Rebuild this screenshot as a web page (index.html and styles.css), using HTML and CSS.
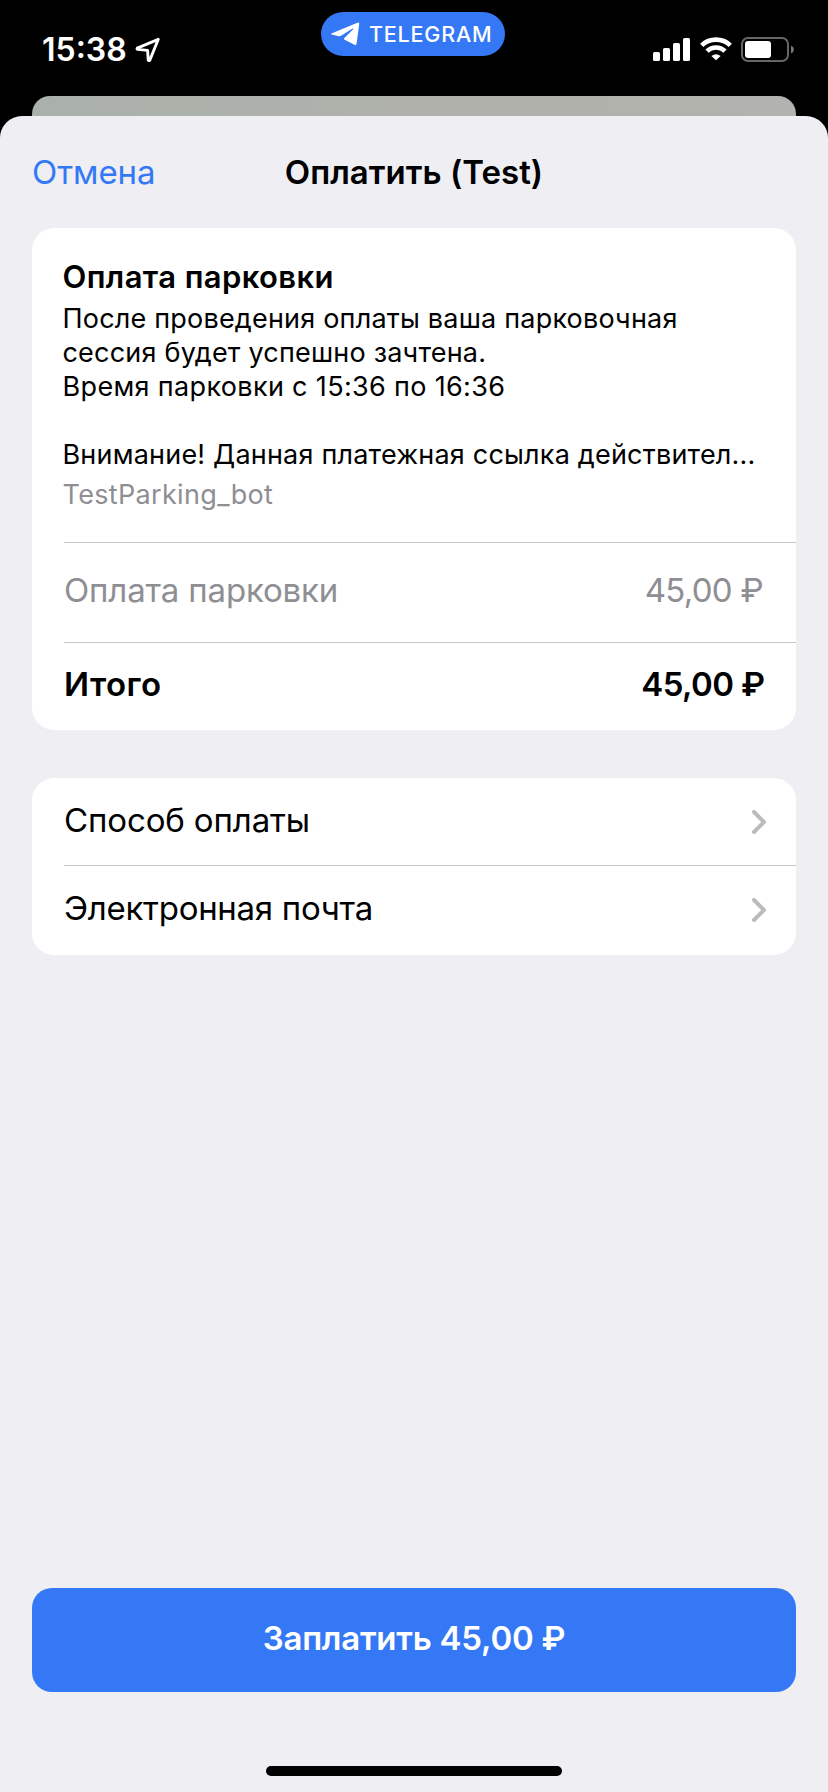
FILE: index.html
```html
<!DOCTYPE html>
<html lang="ru">
<head>
<meta charset="utf-8">
<title>Оплатить (Test)</title>
<link rel="stylesheet" href="styles.css">
</head>
<body>
<div class="screen">
  <header class="status">
    <div class="status-left">
      <span class="clock">15:38</span>
      <svg class="location" width="26" height="26" viewBox="0 0 26 26"><path d="M23.3 2.3 2.2 11.2 Q1.6 12.2 2.8 12.4 L12.6 13.4 13.2 23 Q13.8 24.2 14.8 23.2 Z" fill="none" stroke="#fff" stroke-width="2.9" stroke-linejoin="round"/></svg>
    </div>
    <div class="pill">
      <svg width="29" height="24" viewBox="0 0 29 24"><path d="M.4 11.5 26.4.7Q28.4 0 28.2 2.2L25.6 21.6Q25.1 24 23 22.6L13.6 17.8Q12.3 17 13.4 16L22.2 7.2Q22.6 6.2 21.2 6.8L10.4 13.6Q8.6 14.5 6.8 13.9L.8 12.5Q-.4 12 .4 11.5Z" fill="#fff"/></svg>
      <span class="pill-text">TELEGRAM</span>
    </div>
    <div class="status-right">
      <svg class="signal" width="37" height="23" viewBox="0 0 37 23" fill="#fff"><rect x="0" y="14" width="7" height="9" rx="1.6"/><rect x="10" y="10" width="7" height="13" rx="1.6"/><rect x="20" y="5" width="7" height="18" rx="1.6"/><rect x="30" y="0" width="7" height="23" rx="1.6"/></svg>
      <svg class="wifi" width="32" height="24" viewBox="0 0 32 24" fill="none" stroke="#fff" stroke-width="4.6"><path d="M1.7 8.4A20.7 20.7 0 0 1 30.3 8.4"/><path d="M7 14.1A13 13 0 0 1 25 14.1"/><path d="M16 23.3 11.4 18.9Q16 15.4 20.6 18.9Z" fill="#fff" stroke="none"/></svg>
      <svg class="battery" width="53" height="25" viewBox="0 0 53 25"><rect x="1" y="1" width="46" height="23" rx="6" fill="none" stroke="#666" stroke-width="2"/><rect x="4" y="4" width="26" height="17" rx="3" fill="#fff"/><path d="M50 8.5Q53 9.8 53 12.5T50 16.500Z" fill="#777"/></svg>
    </div>
  </header>
  <div class="peek"></div>
  <main class="sheet">
    <nav class="nav">
      <span class="cancel">Отмена</span>
      <h1 class="title">Оплатить (Test)</h1>
    </nav>
    <section class="card">
      <div class="invoice">
        <h2 class="invoice-title">Оплата парковки</h2>
        <p class="description">После проведения оплаты ваша парковочная<br>сессия будет успешно зачтена.<br><span class="time">Время парковки с 15:36 по 16:36</span><br><br>Внимание! Данная платежная ссылка действител...</p>
        <p class="bot">TestParking_bot</p>
      </div>
      <div class="row price-row"><span class="item">Оплата парковки</span><span class="price">45,00 ₽</span></div>
      <div class="row total-row"><span class="total-label">Итого</span><span class="total">45,00 ₽</span></div>
    </section>
    <section class="card options">
      <div class="row option"><span class="method">Способ оплаты</span><svg width="14" height="24" viewBox="0 0 14 24"><path d="M2 2 12 12 2 22" class="chevron"/></svg></div>
      <div class="row option second"><span class="email">Электронная почта</span><svg width="14" height="24" viewBox="0 0 14 24"><path d="M2 2 12 12 2 22" class="chevron"/></svg></div>
    </section>
    <button class="pay">Заплатить 45,00 ₽</button>
    <div class="home"></div>
  </main>
</div>
</body>
</html>
```
FILE: styles.css
```css
* { box-sizing: border-box; }
body { margin: 0; background: #000; font-family: Inter, "Liberation Sans", sans-serif; color: #000; }
h1, h2, p { margin: 0; }
svg { display: block; flex: none; }
.screen { width: 828px; height: 1792px; display: flex; flex-direction: column; overflow: hidden; }
.screen span, .screen h1, .screen h2, .screen p { white-space: nowrap; }

.status { height: 96px; display: grid; grid-template-columns: 321px 184px 323px; color: #fff; }
.status-left { display: flex; align-items: flex-start; padding: 37px 0 0 42px; }
.clock { width: 93px; font-size: 32px; line-height: 26px; font-weight: 600; }
.pill { margin-top: 12px; height: 44px; border-radius: 22px; background: #3478f6; display: flex; align-items: center; padding-left: 10px; gap: 9px; }
.pill-text { font-size: 21.5px; font-weight: 500; letter-spacing: 0.8px; }
.status-right { display: flex; align-items: flex-start; padding: 37px 0 0 148px; }
.signal { margin: 1px 10px 0 0; }
.wifi { margin-right: 9px; }

.peek { height: 20px; margin: 0 32px; border-radius: 18px 18px 0 0; background: linear-gradient(90deg, #aab1aa, #b1b1ac 60%, #b2b3ae); flex: none; }
.sheet { flex: 1; background: #eeeef3; border-radius: 22px 22px 0 0; padding: 0 32px; display: flex; flex-direction: column; }
.nav { height: 112px; flex: none; display: grid; grid-template-columns: 1fr auto 1fr; align-items: center; }
.cancel { color: #3478f6; font-size: 33px; line-height: 40px; letter-spacing: -0.05px; }
.title { font-size: 33px; line-height: 40px; font-weight: 600; letter-spacing: 0.03px; }

.card { background: #fff; border-radius: 22px; flex: none; }
.invoice { height: 314px; padding: 30px 0 0 30.5px; }
.invoice-title { font-size: 31px; line-height: 38px; font-weight: 600; letter-spacing: 0.38px; }
.description { font-size: 27px; line-height: 34px; margin-top: 6px; letter-spacing: 0.2px; }
.time { letter-spacing: 0.34px; }
.bot { font-size: 27px; line-height: 34px; margin-top: 6px; color: #8e8e93; letter-spacing: 0.33px; }
.row { margin-left: 32px; border-top: 1px solid #c7c7cb; display: flex; align-items: center; justify-content: space-between; font-size: 33px; line-height: 40px; padding-right: 33px; }
.price-row { height: 100px; color: #8e8e93; padding-bottom: 6px; }
.item { letter-spacing: -0.15px; }
.price { letter-spacing: -0.7px; }
.total-row { height: 88px; font-weight: 600; padding: 0 31.5px 6px 0; }
.total-label { letter-spacing: 0.4px; }
.total { letter-spacing: -0.6px; }
.options { margin-top: 48px; }
.option { height: 87px; padding-right: 30px; border-top: 0; }
.second { height: 90px; border-top: 1px solid #c7c7cb; padding-bottom: 2px; }
.method { padding-bottom: 4px; letter-spacing: -0.13px; }
.email { padding-bottom: 3px; letter-spacing: -0.28px; }
.chevron { fill: none; stroke: #bbbbbe; stroke-width: 4; stroke-linecap: round; stroke-linejoin: round; }

.pay { margin-top: auto; height: 104px; flex: none; border: 0; padding: 0 0 4px; border-radius: 20px; background: #3478f6; color: #fff; font: 600 33px/40px Inter, sans-serif; letter-spacing: -0.25px; }
.home { width: 296px; height: 10px; flex: none; border-radius: 5px; background: #000; margin: 74px auto 16px; }
```
